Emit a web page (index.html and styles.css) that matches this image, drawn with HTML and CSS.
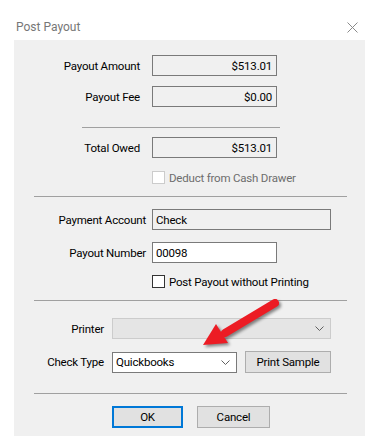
FILE: index.html
```html
<!DOCTYPE html>
<html lang="en">
<head>
  <meta charset="UTF-8" />
  <meta name="viewport" content="width=device-width, initial-scale=1.0"/>
  <title>Post Payout</title>
  <link rel="stylesheet" href="styles.css">
</head>
<body>
  <div class="window">
    <header class="titlebar">
      <span class="title">Post Payout</span>
      <svg class="close" width="11" height="11" viewBox="0 0 11 11">
        <path d="M0.5 0.5 L10.5 10.5 M10.5 0.5 L0.5 10.5" stroke="#8a8a8a" stroke-width="1" fill="none"/>
      </svg>
    </header>

    <div class="client">
      <!-- amounts -->
      <section class="group amounts">
        <div class="row">
          <label>Payout Amount</label>
          <div class="field readonly num">$513.01</div>
        </div>
        <div class="row">
          <label>Payout Fee</label>
          <div class="field readonly num">$0.00</div>
        </div>
        <hr class="rule short">
        <div class="row first">
          <label>Total Owed</label>
          <div class="field readonly num">$513.01</div>
        </div>
        <div class="check-row disabled">
          <span class="box"></span>
          <span>Deduct from Cash Drawer</span>
        </div>
      </section>

      <hr class="rule">

      <!-- account -->
      <section class="group account">
        <div class="row">
          <label>Payment Account</label>
          <div class="field readonly wide">Check</div>
        </div>
        <div class="row">
          <label>Payout Number</label>
          <div class="field">00098</div>
        </div>
        <div class="check-row">
          <span class="box"></span>
          <span>Post Payout without Printing</span>
        </div>
      </section>

      <hr class="rule">

      <!-- printing -->
      <section class="group printing">
        <div class="row">
          <label>Printer</label>
          <div class="select disabled wide">
            <span></span>
            <svg class="chev" width="9" height="5" viewBox="0 0 9 5"><path d="M0.5 0.5 L4.5 4.5 L8.5 0.5" stroke="#606060" fill="none"/></svg>
          </div>
        </div>
        <div class="row">
          <label>Check Type</label>
          <div class="select">
            <span>Quickbooks</span>
            <svg class="chev" width="9" height="5" viewBox="0 0 9 5"><path d="M0.5 0.5 L4.5 4.5 L8.5 0.5" stroke="#606060" fill="none"/></svg>
          </div>
          <button class="btn sample">Print Sample</button>
        </div>
      </section>

      <hr class="rule">

      <div class="actions">
        <button class="btn ok">OK</button>
        <button class="btn cancel">Cancel</button>
      </div>
    </div>

    <!-- red callout arrow -->
    <svg class="arrow" width="100" height="70" viewBox="0 0 100 70">
      <line x1="80" y1="7" x2="30" y2="37" stroke="#ec1c24" stroke-width="8" stroke-linecap="round"/>
      <polygon points="8,49 21,28 33,47" fill="#ec1c24"/>
    </svg>
  </div>
</body>
</html>
```

FILE: styles.css
```css
body {
  margin: 0;
  background-color: white;
  font-family: 'Roboto', sans-serif;
  font-size: 11.5px;
  letter-spacing: -0.2px;
  color: #000;
}
.window {
  position: relative;
  width: 375px;
  height: 436px;
  overflow: hidden;
}
.titlebar {
  height: 40px;
  display: flex;
  justify-content: space-between;
  align-items: center;
  padding: 14px 17px 0 16px;
  box-sizing: border-box;
}
.title {
  color: #777;
  font-size: 12px;
  letter-spacing: 0;
}
.close {
  margin-top: 1px;
}
.client {
  margin-left: 14px;
  width: 351px;
  height: 396px;
  background-color: #f0f0f0;
  overflow: hidden;
}
.group {
  display: flex;
  flex-direction: column;
}
.row {
  display: flex;
  align-items: center;
  gap: 12px;
}
.row label {
  text-align: right;
  white-space: nowrap;
}
.field, .select {
  box-sizing: border-box;
  height: 21px;
  width: 125px;
  border: 1px solid #7a7a7a;
  background-color: white;
  padding: 0 3px;
  display: flex;
  align-items: center;
}
.field.readonly {
  background-color: #f0f0f0;
}
.field.num {
  justify-content: flex-end;
  padding-right: 4px;
}
.rule {
  border: none;
  border-top: 1px solid #a0a0a0;
  margin: 12px 18px 0 20px;
  height: 0;
}
.rule.short {
  margin: 10px 0 0 68px;
  width: 198px;
}

/* amounts */
.amounts {
  padding-top: 15px;
}
.amounts .row {
  margin-bottom: 10px;
}
.amounts .row.first {
  margin-top: 9px;
}
.amounts label {
  width: 126px;
}
.check-row {
  display: flex;
  align-items: center;
  gap: 4px;
  margin-left: 138px;
  margin-top: 3px;
  height: 13px;
}
.check-row .box {
  width: 13px;
  height: 13px;
  box-sizing: border-box;
  border: 1px solid #333;
  background-color: white;
}
.check-row.disabled {
  color: #6d6d6d;
}
.check-row.disabled .box {
  border-color: #cccccc;
}

/* account */
.account {
  padding-top: 12px;
}
.account .row {
  gap: 6px;
  margin-bottom: 12px;
}
.account label {
  width: 132px;
}
.account .wide {
  width: 179px;
}
.account .check-row {
  margin-top: 0;
}

/* printing */
.printing {
  padding-top: 17px;
}
.printing .row {
  gap: 8px;
  margin-bottom: 12px;
}
.printing .row:last-child {
  margin-bottom: 8px;
}
.printing label {
  width: 90px;
}
.select {
  justify-content: space-between;
  padding: 0 6px 0 3px;
}
.select.disabled {
  background-color: #e5e5e5;
  border-color: #cccccc;
}
.select.wide {
  width: 219px;
}

.btn {
  box-sizing: border-box;
  height: 22px;
  background-color: #e1e1e1;
  border: 1px solid #adadad;
  font-family: 'Roboto', sans-serif;
  font-size: 11.5px;
  letter-spacing: -0.2px;
  color: #000;
  padding: 0;
}
.sample {
  width: 86px;
}
.actions {
  display: flex;
  gap: 14px;
  padding: 12px 0 0 98px;
}
.ok {
  width: 71px;
  border: 2px solid #0078d7;
}
.cancel {
  width: 73px;
}

.arrow {
  position: absolute;
  left: 195px;
  top: 296px;
  filter: drop-shadow(2px 2px 1.5px rgba(0, 0, 0, 0.45));
}
```
